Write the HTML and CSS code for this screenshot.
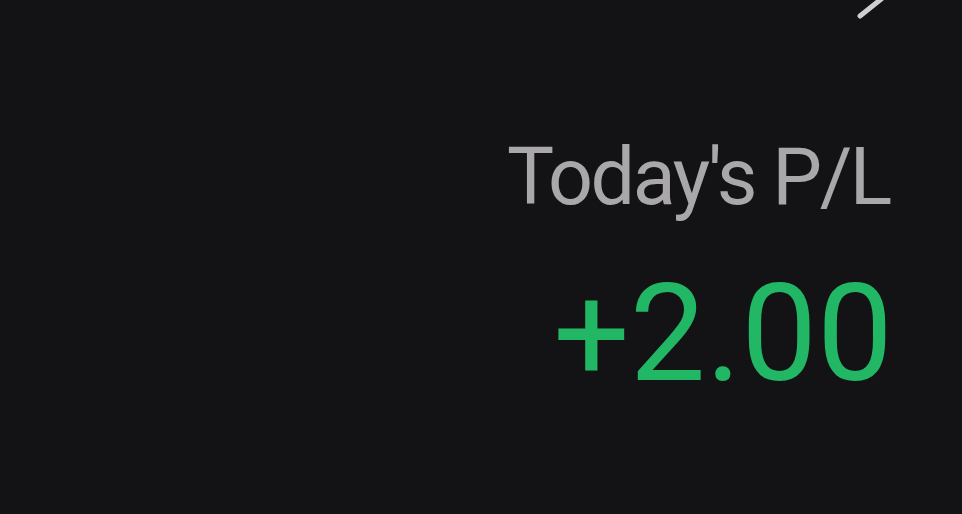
FILE: index.html
```html
<!DOCTYPE html>
<html>
<head>
<meta charset="utf-8">
<meta name="viewport" content="width=device-width, initial-scale=1">
<title>Today's P/L</title>
<link rel="stylesheet" href="styles.css">
</head>
<body>
<header class="topbar">
  <svg class="chevron" width="40" height="20" viewBox="0 0 40 20">
    <path d="M60 -30 L34 -8 L4 16" fill="none" stroke="#cfcfd1" stroke-width="5" stroke-linecap="round" stroke-linejoin="round"/>
  </svg>
</header>
<main class="pnl">
  <div class="pnl-label">Today's P/L</div>
  <div class="pnl-value">+2.00</div>
</main>
</body>
</html>
```

FILE: styles.css
```css
* {box-sizing: border-box}

body {
 margin: 0;
 background: #131315;
 font-family: Roboto, "Noto Sans", sans-serif;
 height: 514px;
 overflow: hidden;
}

.topbar {
 display: flex;
 justify-content: flex-end;
 padding-right: 66px;
 height: 20px;
}

.pnl {
 display: flex;
 flex-direction: column;
 align-items: flex-end;
 padding: 118px 72px 0 0;
}

.pnl-label {
 font-size: 79px;
 line-height: 1;
 color: #a9a7a9;
 letter-spacing: -2.4px;
}

.pnl-value {
 margin: 50px -3px 0 0;
 font-size: 135px;
 line-height: 1;
 color: #21b765;
}
```
